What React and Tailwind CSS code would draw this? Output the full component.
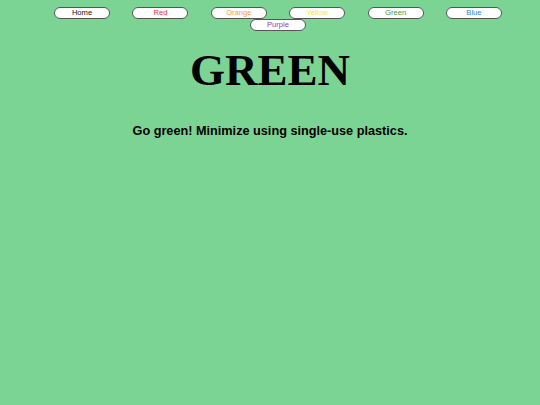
import React from 'react';

const links = [
  { label: 'Home', color: 'text-[#111]' },
  { label: 'Red', color: 'text-[#e53935]' },
  { label: 'Orange', color: 'text-[#ff9a3c]' },
  { label: 'Yellow', color: 'text-[#ffe14d]' },
  { label: 'Green', color: 'text-[#3f9a4f]' },
  { label: 'Blue', color: 'text-[#2f7de1]' },
  { label: 'Purple', color: 'text-[#8e3fb0]' },
];

export default function App() {
  return (
    <div className="min-h-[405px] w-full bg-[#7bd494] font-['Liberation_Sans',Arial,sans-serif]">
      <nav className="flex flex-wrap justify-center gap-x-[22.4px] pl-4 pt-[7px]">
        {links.map((l) => (
          <button
            key={l.label}
            className={`h-[12px] w-[56px] rounded-full border border-[#555] bg-white text-[7.6px] leading-none ${l.color}`}
          >
            {l.label}
          </button>
        ))}
      </nav>
      <h1 className="mt-[17px] text-center font-['Liberation_Serif','Times_New_Roman',serif] text-[45px] font-bold leading-none text-black">
        GREEN
      </h1>
      <p className="mt-[32px] text-center text-[12.7px] font-bold leading-none text-black">
        Go green! Minimize using single-use plastics.
      </p>
    </div>
  );
}
